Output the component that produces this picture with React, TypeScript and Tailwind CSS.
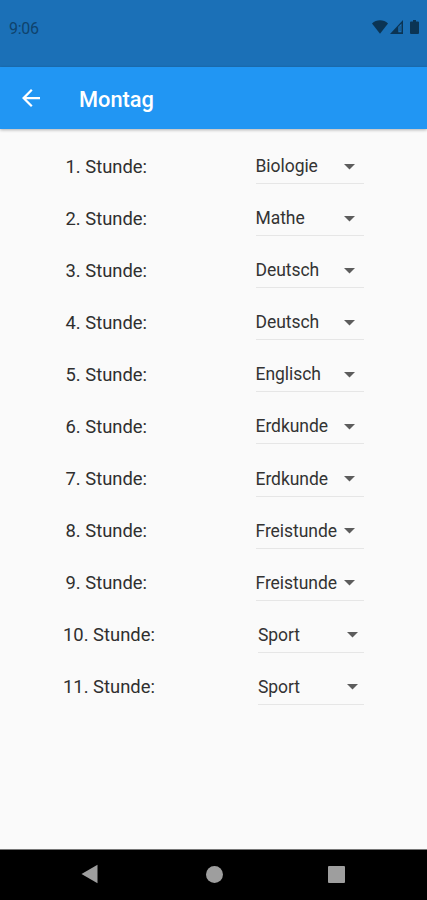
import React, { useState } from 'react';

interface Lesson {
    hour: number;
    subject: string;
}

const SUBJECTS = ['Biologie', 'Mathe', 'Deutsch', 'Englisch', 'Erdkunde', 'Freistunde', 'Sport'];

const MONDAY: Lesson[] = [
    { hour: 1, subject: 'Biologie' },
    { hour: 2, subject: 'Mathe' },
    { hour: 3, subject: 'Deutsch' },
    { hour: 4, subject: 'Deutsch' },
    { hour: 5, subject: 'Englisch' },
    { hour: 6, subject: 'Erdkunde' },
    { hour: 7, subject: 'Erdkunde' },
    { hour: 8, subject: 'Freistunde' },
    { hour: 9, subject: 'Freistunde' },
    { hour: 10, subject: 'Sport' },
    { hour: 11, subject: 'Sport' },
];

const StatusBar: React.FC = () => (
    <div className="flex h-[67px] items-start justify-between bg-[#1b70b7] pl-[9px] pr-[8px] pt-[19px] text-[#0b3454]">
        <span className="text-[16px] leading-[20px] tracking-[-0.3px] text-[#0f436d]">9:06</span>
        <div className="flex pt-px">
            <svg width="16" height="14" viewBox="0 0 16 14" fill="currentColor">
                <path d="M0 3.4C2.2 1.4 5 .3 8 .3s5.8 1.1 8 3.1L8 13.8z" />
            </svg>
            <svg className="ml-[2px]" width="13" height="14" viewBox="0 0 13 14" fill="currentColor">
                <path d="M13 0v14H0zM8.300 6.800v5.400h3.200V3.400z" fillRule="evenodd" />
                <path d="M9.500 6h1.100v5H9.500z" opacity=".5" />
            </svg>
            <svg className="ml-[7px]" width="9" height="14" viewBox="0 0 9 14" fill="currentColor">
                <path d="M3 0h3v1.400h2a1 1 0 0 1 1 1V13a1 1 0 0 1-1 1H1a1 1 0 0 1-1-1V2.400a1 1 0 0 1 1-1h2z" />
            </svg>
        </div>
    </div>
);

const AppBar: React.FC<{ title: string }> = ({ title }) => (
    <header className="flex h-[61.5px] items-center bg-[#2196f3] pl-[22px] text-white shadow-[0_1px_3px_rgba(0,0,0,0.3)]">
        <button type="button" aria-label="Zurück">
            <svg width="18" height="18" viewBox="4 4 16 16" fill="currentColor">
                <path d="M20 11H7.830l5.590-5.590L12 4l-8 8 8 8 1.410-1.410L7.830 13H20v-2z" />
            </svg>
        </button>
        <h1 className="ml-[39px] pt-[4px] text-[21.800px] font-medium leading-[28px]">{title}</h1>
    </header>
);

interface LessonRowProps {
    lesson: Lesson;
    onChange: (subject: string) => void;
}

const LessonRow: React.FC<LessonRowProps> = ({ lesson, onChange }) => {
    const [open, setOpen] = useState<boolean>(false);
    const wide = lesson.hour > 9;

    return (
        <div className={`flex h-[52.1px] ${wide ? 'pl-[63px]' : 'pl-[65.5px]'}`}>
            <span className={`pt-[13px] text-[18.4px] leading-[24px] text-[#2f2f2f] ${wide ? 'w-[195px]' : 'w-[190px]'}`}>
                {lesson.hour}. Stunde:
            </span>
            <div className="relative">
                <button
                    type="button"
                    onClick={() => setOpen(!open)}
                    className={`flex h-[42.5px] items-end border-b border-[#e6e6e6] pb-[5px] text-[#333] ${wide ? 'w-[106px]' : 'w-[108px]'}`}
                >
                    <span className="flex-1 text-left text-[17.5px] leading-[24px] tracking-[-0.05px]">{lesson.subject}</span>
                    <svg
                        className={`mb-[8.5px] ${wide ? 'mr-[6px]' : 'mr-[8.5px]'}`}
                        width="11"
                        height="6"
                        viewBox="0 0 11 6"
                        fill="#5c5c5c"
                    >
                        <path d="M0 0h11L5.5 5.6z" />
                    </svg>
                </button>
                {open && (
                    <ul className="absolute left-0 top-0 z-10 w-[130px] bg-white py-2 shadow-lg">
                        {SUBJECTS.map((subject) => (
                            <li key={subject}>
                                <button
                                    type="button"
                                    className="w-full px-3 py-2 text-left"
                                    onClick={() => {
                                        onChange(subject);
                                        setOpen(false);
                                    }}
                                >
                                    {subject}
                                </button>
                            </li>
                        ))}
                    </ul>
                )}
            </div>
        </div>
    );
};

const NavigationBar: React.FC = () => (
    <nav className="flex h-[51px] items-center border-t border-[#777] bg-black pb-[2px] pl-[81px] text-[#9e9e9e]">
        <svg width="17" height="20" viewBox="0 0 17 20" fill="currentColor">
            <path d="M16.5 .8v18.400L.5 10z" />
        </svg>
        <div className="ml-[107.5px] size-[17px] rounded-full bg-[#9e9e9e]" />
        <div className="ml-[105.5px] size-[17px] rounded-[1px] bg-[#9e9e9e]" />
    </nav>
);

const App: React.FC = () => {
    const [lessons, setLessons] = useState<Lesson[]>(MONDAY);

    const updateLesson = (hour: number, subject: string) => {
        setLessons(lessons.map((l) => (l.hour === hour ? { ...l, subject } : l)));
    };

    return (
        <div className="flex h-screen flex-col overflow-hidden bg-[#fafafa] font-['Roboto',sans-serif]">
            <StatusBar />
            <AppBar title="Montag" />
            <main className="flex-1 pt-[13px]">
                {lessons.map((lesson) => (
                    <LessonRow
                        key={lesson.hour}
                        lesson={lesson}
                        onChange={(subject) => updateLesson(lesson.hour, subject)}
                    />
                ))}
            </main>
            <NavigationBar />
        </div>
    );
};

export default App;
